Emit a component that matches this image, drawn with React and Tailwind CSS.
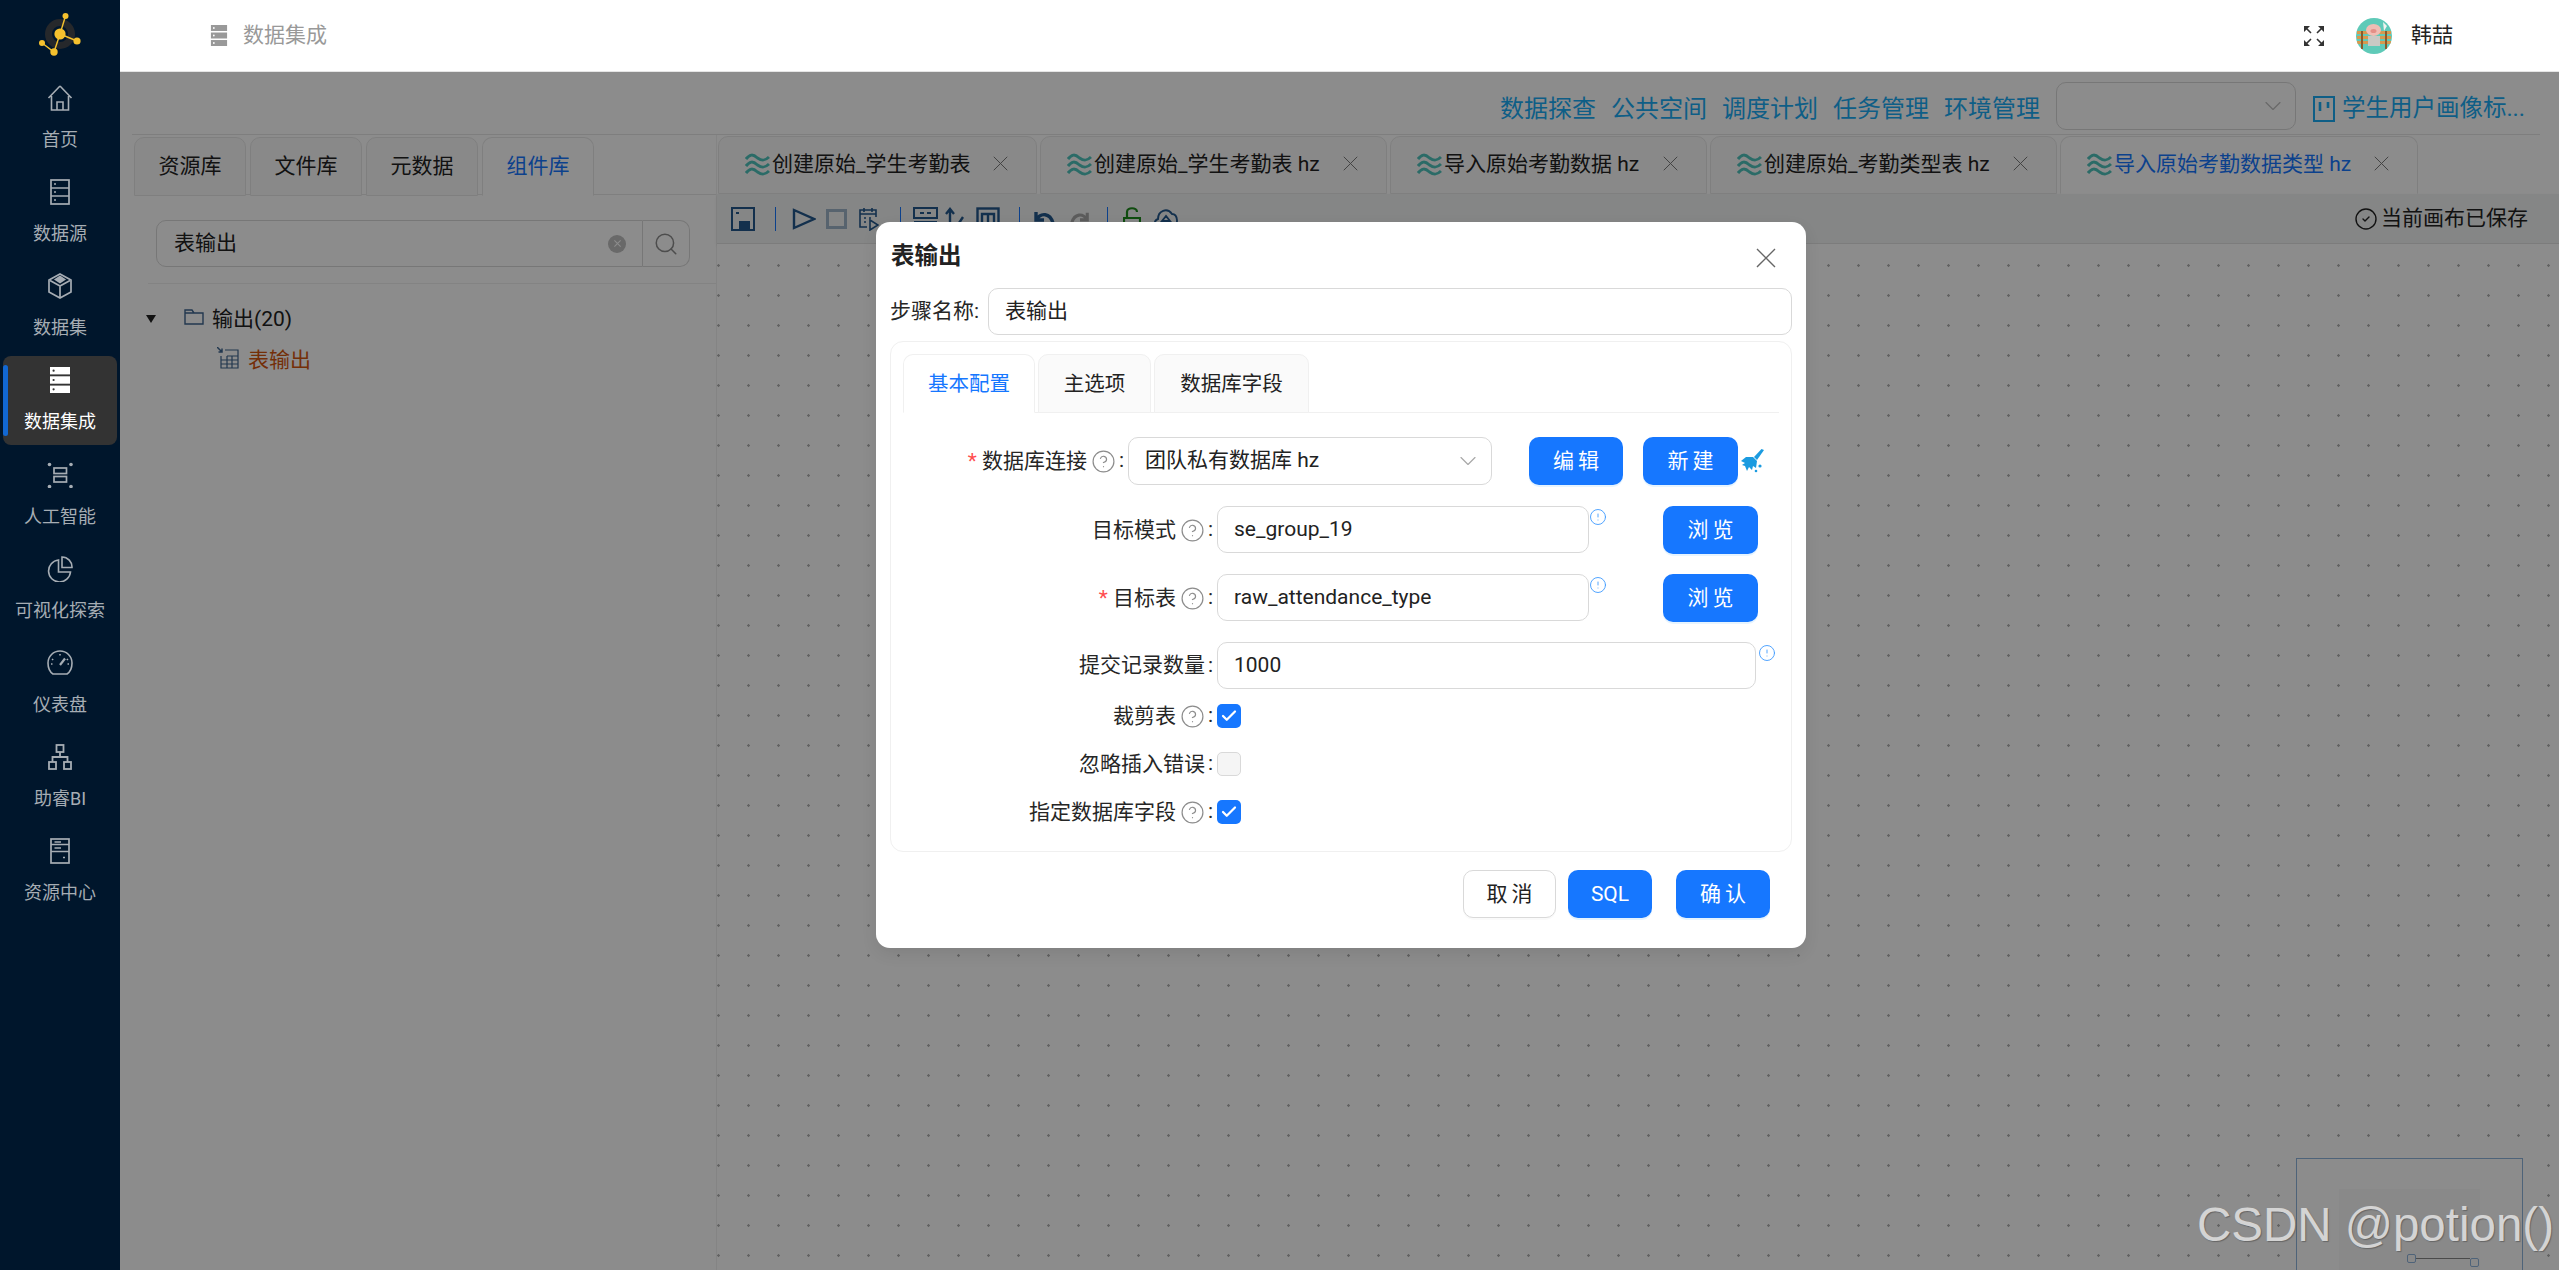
import React from "react";
import { ChevronDown, CircleHelp, CircleAlert, Search, CircleCheck, Check } from "lucide-react";

const S = ({ children, w = 26, h = 26, vb = "0 0 26 26", sw = 1.6, className = "" }) => (
  <svg width={w} height={h} viewBox={vb} fill="none" stroke="currentColor" strokeWidth={sw} className={className}>
    {children}
  </svg>
);

const Cross = ({ size = 15, sw = 1.3, className = "" }) => (
  <svg width={size} height={size} viewBox="0 0 20 20" fill="none" stroke="currentColor" strokeWidth={sw} className={className}>
    <path d="M1 1 L19 19 M19 1 L1 19" />
  </svg>
);

const StackIcon = ({ w = 20, h = 26, dot = "#333" }) => (
  <svg width={w} height={h} viewBox="0 0 20 26" fill="currentColor">
    <rect x="0" y="0" width="20" height="7.4" />
    <rect x="0" y="9.3" width="20" height="7.4" />
    <rect x="0" y="18.6" width="20" height="7.4" />
    <circle cx="3.6" cy="3.7" r="1.1" fill={dot} />
    <circle cx="3.6" cy="13" r="1.1" fill={dot} />
    <circle cx="3.6" cy="22.3" r="1.1" fill={dot} />
  </svg>
);

const icons = {
  home: (
    <S>
      <path d="M13 1 L1.5 13 M13 1 L24.5 13 M4.5 11 V25 H21.5 V11" />
      <path d="M10 25 V17 H16 V25" />
    </S>
  ),
  source: (
    <S w={20} vb="0 0 20 26" sw={1.7}>
      <rect x="1" y="1" width="18" height="24" />
      <path d="M1 9 H19 M1 17 H19" />
      <path d="M4 5 H6 M4 13 H6 M4 21 H6" />
    </S>
  ),
  box: (
    <S w={24} vb="0 0 24 26" sw={1.7}>
      <path d="M12 1 L23 7 V19 L12 25 L1 19 V7 Z" />
      <path d="M12 13 V25 M12 13 L2 7.5 M12 13 L22 7.5" />
      <path d="M12 3.5 L16.5 6.5 L12 9.5 L7.5 6.5 Z" fill="currentColor" />
    </S>
  ),
  ai: (
    <svg width="26" height="26" viewBox="0 0 26 26" fill="none" stroke="currentColor" strokeWidth="1.7">
      <circle cx="2.5" cy="2.5" r="1.8" fill="currentColor" stroke="none" />
      <circle cx="24" cy="2.5" r="1.8" fill="currentColor" stroke="none" />
      <circle cx="2.5" cy="24.5" r="1.8" fill="currentColor" stroke="none" />
      <circle cx="24" cy="24.5" r="1.8" fill="currentColor" stroke="none" />
      <rect x="7" y="6" width="12.5" height="5.5" />
      <rect x="7" y="14.5" width="12.5" height="5.5" />
    </svg>
  ),
  pie: (
    <S>
      <path d="M11.5 4 A11 11 0 1 0 23.5 16 H11.5 Z" />
      <path d="M15 1 A10 10 0 0 1 25 11.5 H15 Z" />
    </S>
  ),
  gauge: (
    <S>
      <path d="M6 24 H20 C23 22 25 18 25 13 A12 12 0 0 0 1 13 C1 18 3 22 6 24 Z" />
      <path d="M13 15 L18 8.5" strokeWidth="2.2" />
      <path d="M13 4 V5.5 M5 9 L6.2 10 M21 9 L19.8 10 M4 14 H5.5 M22 14 H20.5" />
    </S>
  ),
  bi: (
    <S w={24} vb="0 0 24 26" sw={1.8}>
      <rect x="8.5" y="1" width="7" height="7" />
      <rect x="1" y="18" width="7" height="7" />
      <rect x="16" y="18" width="7" height="7" />
      <path d="M12 8 V13 M4.5 18 V13 H19.5 V18" />
    </S>
  ),
  res: (
    <S w={20} vb="0 0 20 26" sw={1.7}>
      <rect x="1" y="1" width="18" height="24" />
      <path d="M1 13.5 H19 M1 6.5 H19 M1 6.5" />
      <path d="M4.5 4 H11 M4.5 10 H11 M13 19.5 H15" />
    </S>
  ),
};

const nav = [
  ["home", "首页"],
  ["source", "数据源"],
  ["box", "数据集"],
  ["stack", "数据集成"],
  ["ai", "人工智能"],
  ["pie", "可视化探索"],
  ["gauge", "仪表盘"],
  ["bi", "助睿BI"],
  ["res", "资源中心"],
];

const Logo = () => (
  <svg width="80" height="65" viewBox="0 0 80 65" fill="#f5c12e" stroke="#f5c12e">
    <circle cx="40" cy="31" r="11.5" fill="none" stroke="#26282b" strokeWidth="7" />
    <path d="M40 31 L45.5 13 M40 31 L57 38 M40 31 L34 49 L22 40" strokeWidth="1.4" fill="none" />
    <circle cx="40" cy="31" r="5.6" stroke="none" />
    <circle cx="45.5" cy="13" r="3" stroke="none" />
    <circle cx="57" cy="38" r="3.6" stroke="none" />
    <circle cx="34" cy="49" r="3.7" stroke="none" />
    <circle cx="22" cy="40" r="3" stroke="none" />
  </svg>
);

const Wave = () => (
  <svg width="25" height="24" viewBox="0 0 25 24" fill="none" stroke="#4fc4bc" strokeWidth="3" className="shrink-0">
    <path d="M1 6 C5 1 8 1 12.5 5 C17 8 20 8 24 4" />
    <path d="M1 13 C5 8 8 8 12.5 12 C17 15 20 15 24 11" />
    <path d="M1 20 C5 15 8 15 12.5 19 C17 22 20 22 24 18" />
  </svg>
);

const Sep = () => <div className="h-[24px] w-px shrink-0 bg-[#1677ff]" />;

const btn = "flex h-[48px] shrink-0 items-center justify-center rounded-[10px] bg-[#1677ff] pt-[1px] text-[21px] text-white shadow-[0_2px_0_rgba(5,145,255,0.1)]";

const Help = () => <CircleHelp size={25} strokeWidth={1.15} className="shrink-0 text-[#8c8c8c]" />;
const Info = () => <CircleAlert size={18} strokeWidth={1.2} className="mt-[2px] shrink-0 self-start text-[#3f9bff]" />;

const Label = ({ w, star, help, children }) => (
  <div className={`flex shrink-0 items-center justify-end pr-[4px] text-[21px] text-[#262626] ${w}`}>
    {star && <span className="mr-[5px] pt-[1px] text-[21px] text-[#ff4d4f]">*</span>}
    <span className="pt-[1px]">{children}</span>
    {help && <span className="ml-[4px] flex"><Help /></span>}
    <span className="ml-[3px]">:</span>
  </div>
);

const Field = ({ w, children }) => (
  <div className={`flex h-[47px] shrink-0 items-center rounded-[10px] border border-[#d9d9d9] bg-white px-[16px] pt-[1px] text-[21px] text-[#222] ${w}`}>
    {children}
  </div>
);

const CheckBox = ({ on }) =>
  on ? (
    <div className="flex h-[24px] w-[24px] items-center justify-center rounded-[5px] bg-[#1677ff]">
      <Check size={18} strokeWidth={3} className="text-white" />
    </div>
  ) : (
    <div className="h-[24px] w-[24px] rounded-[5px] border border-[#d9d9d9] bg-[#f5f5f5]" />
  );

const leftTabs = ["资源库", "文件库", "元数据", "组件库"];
const canvasTabs = [
  ["创建原始_学生考勤表", "w-[319px]"],
  ["创建原始_学生考勤表 hz", "w-[347px]"],
  ["导入原始考勤数据 hz", "w-[317px]"],
  ["创建原始_考勤类型表 hz", "w-[347px]"],
  ["导入原始考勤数据类型 hz", "w-[358px]"],
];
const links = ["数据探查", "公共空间", "调度计划", "任务管理", "环境管理"];

export default function App() {
  return (
    <div className="relative flex h-screen w-screen overflow-hidden bg-white font-['Roboto','Noto_Sans_CJK_SC',sans-serif]">
      <aside className="flex w-[120px] shrink-0 flex-col items-center bg-[#00162c]">
        <div className="flex h-[74px] w-full items-center justify-center pb-[4px]">
          <Logo />
        </div>
        {nav.map(([k, t]) => {
          const on = k === "stack";
          return (
            <div
              key={k}
              className={`relative mb-[5.125px] flex h-[89px] w-[114px] shrink-0 flex-col items-center rounded-[8px] pt-[11px] ${on ? "bg-[#333333] text-white" : "text-[#a6adb4]"}`}
            >
              {on && <div className="absolute left-0 top-[9px] h-[71px] w-[5px] rounded-[3px] bg-[#1268d3]" />}
              <div className="flex h-[26px] items-center justify-center">
                {on ? <StackIcon /> : icons[k]}
              </div>
              <div className="mt-[16px] h-[26px] text-[18px] leading-[26px]">{t}</div>
            </div>
          );
        })}
      </aside>

      <div className="flex min-w-0 flex-1 flex-col">
        <header className="z-20 flex h-[72px] shrink-0 items-center border-b border-[#e5e5e5] bg-white pl-[90px] pr-[106px]">
          <div className="text-[#999]"><StackIcon w={18} h={21} dot="#fff" /></div>
          <span className="ml-[15px] text-[21px] text-[#999]">数据集成</span>
          <div className="ml-auto text-[#333]">
            <svg width="20" height="20" viewBox="0 0 20 20" fill="currentColor" stroke="currentColor" strokeWidth="1.6">
              <path d="M1 1 L7 7 M19 1 L13 7 M1 19 L7 13 M19 19 L13 13" fill="none" />
              <path d="M0 0 H6 L0 6 Z M20 0 V6 L14 0 Z M0 20 V14 L6 20 Z M20 20 H14 L20 14 Z" stroke="none" />
            </svg>
          </div>
          <div className="ml-[32px] h-[36px] w-[36px] overflow-hidden rounded-full">
            <svg width="36" height="36" viewBox="0 0 36 36">
              <rect width="36" height="36" fill="#5fcab8" />
              <rect x="1" y="13" width="34" height="3" fill="#d7994f" />
              <rect x="1" y="18" width="34" height="3" fill="#d7994f" />
              <rect x="1" y="23" width="34" height="3" fill="#d7994f" />
              <rect x="5" y="13" width="2" height="18" fill="#8a5a2a" />
              <rect x="29" y="13" width="2" height="18" fill="#8a5a2a" />
              <rect x="12" y="18" width="12" height="10" fill="#c9c9c4" />
              <ellipse cx="17.5" cy="12" rx="7.5" ry="6" fill="#f0bdb4" />
              <ellipse cx="17.5" cy="13" rx="3" ry="2" fill="#e48f87" />
              <path d="M27 4 L31 8 L28 13 Z" fill="#f3f3f0" />
            </svg>
          </div>
          <span className="ml-[19px] text-[21px] text-[#222]">韩喆</span>
        </header>

        <div className="relative flex min-h-0 flex-1 flex-col bg-white">
          {/* link row */}
          <div className="flex h-[62px] shrink-0 items-center justify-end pr-[34px] pt-[6px]">
            <div className="mr-[1px] mt-[6px] flex items-center gap-[15px] text-[24px] text-[#1aacf5]">
              {links.map((l) => (
                <span key={l}>{l}</span>
              ))}
            </div>
            <div className="ml-[15px] flex h-[48px] w-[240px] items-center justify-end rounded-[10px] border border-[#d9d9d9] pr-[8px] text-[#bfbfbf]">
              <ChevronDown size={28} strokeWidth={1} />
            </div>
            <div className="ml-[17px] mt-[6px] flex items-center text-[23.5px] text-[#1aacf5]">
              <svg width="22" height="28" viewBox="0 0 22 28" fill="none" stroke="currentColor" strokeWidth="2" className="mr-[7px]">
                <rect x="1" y="2" width="20" height="24" />
                <path d="M7 7 V16 M15 7 V13" strokeWidth="2.6" />
              </svg>
              <span>学生用户画像标...</span>
            </div>
          </div>

          <div className="ml-[12px] mr-[19px] h-px shrink-0 bg-[#e6e6e6]" />

          <div className="flex min-h-0 flex-1">
            {/* left panel */}
            <div className="w-[597px] shrink-0 border-r border-[#f0f0f0]">
              <div className="ml-[14px] flex h-[60px] gap-[4px] border-b border-[#e8e8e8] pt-[2px]">
                {leftTabs.map((t, i) => (
                  <div
                    key={t}
                    className={`-mb-px flex h-[59px] w-[112px] items-center justify-center rounded-t-[10px] border border-[#e8e8e8] text-[21px] ${i === 3 ? "border-b-white bg-white text-[#1677ff]" : "bg-[#fafafa] text-[#222]"}`}
                  >
                    {t}
                  </div>
                ))}
              </div>
              <div className="ml-[36px] mr-[26px] mt-[25px] flex h-[47px] items-center">
                <div className="flex h-full flex-1 items-center rounded-l-[10px] border border-[#d9d9d9] pl-[17px] pr-[16px] text-[21px] text-[#222]">
                  <span className="pt-[1px]">表输出</span>
                  <span className="ml-auto flex h-[18px] w-[18px] items-center justify-center rounded-full bg-[#bfbfbf] text-white">
                    <Cross size={7} sw={3} />
                  </span>
                </div>
                <div className="flex h-full w-[47px] items-center justify-center rounded-r-[10px] border border-l-0 border-[#d9d9d9] text-[#8c8c8c]">
                  <Search size={26} strokeWidth={1.4} />
                </div>
              </div>
              <div className="ml-[28px] mt-[16px] h-px bg-[#eeeeee]" />
              <div className="ml-[26px] mt-[20px] flex h-[30px] items-center text-[21px] text-[#222]">
                <svg width="10" height="8" viewBox="0 0 10 8" fill="#222" className="mr-[28px]"><path d="M0 0 H10 L5 8 Z" /></svg>
                <svg width="20" height="16" viewBox="0 0 20 16" fill="none" stroke="#3f6690" strokeWidth="1.4" className="mb-[4px] mr-[8px]">
                  <path d="M1 15 V1 H8 L10 4 H19 V15 Z M1 4 H10" />
                </svg>
                <span className="pt-[1px]">输出(20)</span>
              </div>
              <div className="ml-[97px] mt-[11px] flex h-[30px] items-center text-[21px] text-[#d4560f]">
                <svg width="22" height="22" viewBox="0 0 22 22" fill="none" stroke="#3f6690" strokeWidth="1.2" className="mb-[4px] mr-[9px]">
                  <path d="M4 9 V21 H21 V3 H8 M4 13 H21 M4 17 H21 M10 9 V21 M15 9 V21 M10 9 H21" />
                  <path d="M0 0 L5 5 M5 1.5 V5 H1.5" strokeWidth="1.5" />
                </svg>
                <span className="pt-[1px]">表输出</span>
              </div>
            </div>

            {/* canvas pane */}
            <div className="flex min-w-0 flex-1 flex-col">
              <div className="flex h-[59px] shrink-0 gap-[3px] pl-px pt-[1px]">
                {canvasTabs.map(([t, w], i) => (
                  <div
                    key={t}
                    className={`flex h-[58px] shrink-0 items-center rounded-t-[10px] border border-[#e8e8e8] pl-[26px] text-[21px] ${w} ${i === 4 ? "border-b-white bg-white text-[#1677ff]" : "bg-[#fafafa] text-[#222]"}`}
                  >
                    <Wave />
                    <span className="ml-[2px] whitespace-nowrap">{t}</span>
                    <Cross size={15} sw={1.3} className="mb-[4px] ml-auto mr-[28px] shrink-0 text-[#777]" />
                  </div>
                ))}
              </div>
              <div className="flex h-[50px] shrink-0 items-center border-b border-[#e2e2e2] bg-[#f3f4f4] pl-[14px] pr-[31px] text-[#24588c] shadow-[0_2px_3px_rgba(0,0,0,0.08)]">
                <svg width="24" height="24" viewBox="0 0 24 24" fill="none" stroke="currentColor" strokeWidth="2" className="mr-[20px]">
                  <rect x="1" y="1" width="22" height="22" />
                  <rect x="8" y="14" width="11" height="9" fill="currentColor" stroke="none" />
                  <path d="M5 6 H8" />
                </svg>
                <Sep />
                <svg width="24" height="22" viewBox="0 0 24 22" fill="none" stroke="currentColor" strokeWidth="2.4" className="ml-[16px] mr-[10px]"><path d="M2 2 L22 11 L2 20 Z" /></svg>
                <div className="mr-[12px] h-[20px] w-[21px] border-[3px] border-[#9fb4c9]" />
                <svg width="20" height="24" viewBox="0 0 20 24" fill="none" stroke="currentColor" strokeWidth="1.6" className="mr-[21px]">
                  <path d="M17 10 V3 H1 V20 H8 M5 1 V5 M13 1 V5 M1 7 H17 M5 11 H7 M10 11 H12 M5 15 H7" />
                  <path d="M11 13 L19 18 L11 23 Z" />
                </svg>
                <Sep />
                <svg width="25" height="24" viewBox="0 0 25 24" fill="none" stroke="currentColor" strokeWidth="2" className="ml-[12px] mr-[7px]">
                  <rect x="1" y="1" width="23" height="10" />
                  <path d="M7 6 H11 M14 6 H18 M1 15 H24 M1 20 H24" />
                </svg>
                <svg width="19" height="24" viewBox="0 0 19 24" fill="none" stroke="currentColor" strokeWidth="2.4" className="mr-[12px]">
                  <path d="M5 23 V3 M1 7 L5 2 L9 7 M10 22 L18 10" />
                </svg>
                <svg width="24" height="24" viewBox="0 0 24 24" fill="none" stroke="currentColor" strokeWidth="2.4" className="mr-[19px]">
                  <rect x="1.5" y="1.5" width="21" height="21" />
                  <path d="M6 20 V7 H18 V20 M12 7 V20" />
                </svg>
                <Sep />
                <svg width="22" height="20" viewBox="0 0 22 20" fill="none" stroke="currentColor" strokeWidth="3.4" className="ml-[13px] mr-[15px]"><path d="M3 3 V11 H11 M3 11 C8 3 17 4 20 14" /></svg>
                <svg width="20" height="20" viewBox="0 0 22 20" fill="none" stroke="#a8a8a8" strokeWidth="3.4" className="mr-[17px]"><path d="M19 3 V11 H11 M19 11 C14 3 5 4 2 14" /></svg>
                <Sep />
                <svg width="18" height="24" viewBox="0 0 18 24" fill="none" stroke="#1d8a1d" strokeWidth="2.2" className="ml-[15px] mr-[12px]"><path d="M4 11 V5 C4 0 14 0 14 5 M1 11 H17 V23 H1 Z M9 15 V19" /></svg>
                <svg width="26" height="24" viewBox="0 0 26 24" fill="none" stroke="currentColor" strokeWidth="1.9"><path d="M7 21 C1 21 0 14 5 12 C5 4 14 0 19 7 C25 7 26 19 20 21 Z M13 9 L9 14 H17 Z" /></svg>
                <div className="ml-auto flex items-center text-[21px] text-[#222]">
                  <CircleCheck size={24} strokeWidth={1.4} className="mr-[3px]" />
                  <span className="pt-[1px]">当前画布已保存</span>
                </div>
              </div>
              <div className="relative min-h-0 flex-1 bg-white bg-[radial-gradient(circle_at_1.5px_1.5px,#b5b5b5_1px,transparent_1.5px)] bg-size-[30px_30px] bg-position-[0_20px]">
                <div className="absolute left-[1579px] top-[914px] h-[400px] w-[227px] border border-[#8fb4dc] bg-white">
                  <div className="absolute left-[42px] top-[30px] h-[300px] w-[141px] bg-[#fafafa]" />
                  <div className="absolute left-[110px] top-[95px] h-[9px] w-[9px] rounded-[2px] border border-[#8fb4dc]" />
                  <div className="absolute left-[119px] top-[99px] h-px w-[54px] bg-[#888]" />
                  <div className="absolute left-[173px] top-[99px] h-[9px] w-[9px] rounded-[2px] border border-[#8fb4dc]" />
                </div>
              </div>
            </div>
          </div>

          {/* dim mask over the content area */}
          <div className="absolute inset-0 bg-black/45" />
        </div>
      </div>

      {/* modal */}
      <div className="absolute left-[876px] top-[222px] z-30 h-[726px] w-[930px] rounded-[14px] bg-white px-[14px] pt-[20px] shadow-[0_6px_16px_rgba(0,0,0,0.08)]">
        <div className="relative h-[28px] text-[23.5px] font-bold leading-[28px] text-[#222]">
          <span className="ml-[1px]">表输出</span>
          <Cross size={20} sw={1.4} className="absolute right-[16px] top-[6px] text-[#666]" />
        </div>
        <div className="mt-[18px] flex h-[47px] items-center">
          <div className="w-[98px] shrink-0 pt-[1px] text-[21px] text-[#262626]">步骤名称:</div>
          <Field w="w-[804px]">表输出</Field>
        </div>
        <div className="mt-[6px] h-[511px] rounded-[13px] border border-[#f0f0f0]">
          <div className="mx-[12px] mt-[12px] flex h-[59px] items-end gap-[3px] border-b border-[#f0f0f0]">
            {[
              ["基本配置", "w-[132px]"],
              ["主选项", "w-[113px]"],
              ["数据库字段", "w-[155px]"],
            ].map(([t, w], i) => (
              <div
                key={t}
                className={`-mb-px flex h-[59px] items-center justify-center rounded-t-[10px] border border-[#f0f0f0] pt-[1px] text-[20.5px] ${w} ${i === 0 ? "border-b-white bg-white text-[#1677ff]" : "bg-[#fafafa] text-[#222]"}`}
              >
                {t}
              </div>
            ))}
          </div>

          <div className="mt-[24px] flex h-[48px] items-center">
            <Label w="w-[237px]" star help>数据库连接</Label>
            <div className="flex h-[48px] w-[364px] shrink-0 items-center justify-between rounded-[10px] border border-[#d9d9d9] pl-[16px] pr-[9px] text-[21px] text-[#222]">
              <span>团队私有数据库 hz</span>
              <ChevronDown size={28} strokeWidth={1} className="text-[#a8a8a8]" />
            </div>
            <div className={`${btn} ml-[37px] w-[94px] pl-[4px] tracking-[4px]`}>编辑</div>
            <div className={`${btn} ml-[20px] w-[95px] pl-[4px] tracking-[4px]`}>新建</div>
            <svg width="24" height="24" viewBox="0 0 24 24" fill="#1b9be0" className="ml-[3px] shrink-0">
              <path d="M23 1 L20.5 0 L13 8 L16 11 Z" />
              <path d="M5 8 L12 8 L16 12 L15 19 L12 17 L11 21 L8 18 L6 22 L4 17 L1 16 L4 14 L0 12 Z" />
              <circle cx="19" cy="17" r="1.6" />
              <circle cx="15" cy="22" r="1.3" />
            </svg>
          </div>

          <div className="mt-[21px] flex h-[48px]">
            <Label w="w-[326px]" help>目标模式</Label>
            <Field w="w-[372px]">se_group_19</Field>
            <Info />
            <div className={`${btn} ml-[56px] w-[95px] pl-[4px] tracking-[4px]`}>浏览</div>
          </div>

          <div className="mt-[20px] flex h-[48px]">
            <Label w="w-[326px]" star help>目标表</Label>
            <Field w="w-[372px]">raw_attendance_type</Field>
            <Info />
            <div className={`${btn} ml-[56px] w-[95px] pl-[4px] tracking-[4px]`}>浏览</div>
          </div>

          <div className="mt-[20px] flex h-[47px]">
            <Label w="w-[326px]">提交记录数量</Label>
            <Field w="w-[539px]">1000</Field>
            <span className="ml-[2px] flex"><Info /></span>
          </div>

          {[
            ["裁剪表", true, true],
            ["忽略插入错误", false, false],
            ["指定数据库字段", true, true],
          ].map(([t, help, on], i) => (
            <div key={t} className={`flex h-[24px] items-center ${i === 0 ? "mt-[15px]" : "mt-[24px]"}`}>
              <Label w="w-[326px]" help={help}>{t}</Label>
              <CheckBox on={on} />
            </div>
          ))}
        </div>

        <div className="mt-[18px] flex justify-end pr-[22px]">
          <div className="flex h-[48px] w-[93px] items-center justify-center rounded-[10px] border border-[#d9d9d9] bg-white pl-[4px] pt-[1px] text-[21px] tracking-[4px] text-[#222] shadow-[0_2px_0_rgba(0,0,0,0.02)]">取消</div>
          <div className={`${btn} ml-[12px] w-[84px]`}>SQL</div>
          <div className={`${btn} ml-[24px] w-[94px] pl-[4px] tracking-[4px]`}>确认</div>
        </div>
      </div>

      {/* burned-in watermark of the source image */}
      <div className="absolute bottom-[17px] right-[5px] z-40 font-['Liberation_Sans',sans-serif] text-[47.5px] leading-[56px] text-[#d4d4d4] [text-shadow:1px_1px_1px_#666]">
        CSDN @potion()
      </div>
    </div>
  );
}
